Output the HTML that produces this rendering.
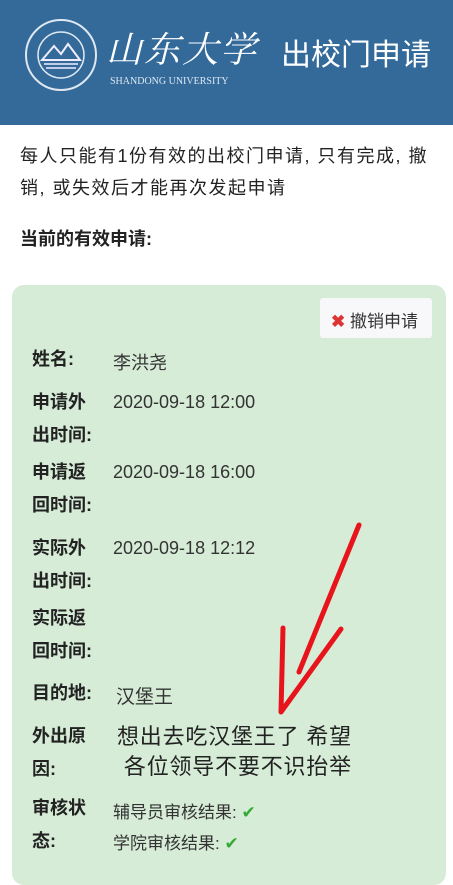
<!DOCTYPE html>
<html><head><meta charset="utf-8"><style>
body{margin:0;width:453px;height:872px;overflow:hidden;background:#fff;font-family:"Liberation Sans","Noto Sans CJK SC",sans-serif;position:relative;color:#222}
.hd{position:absolute;left:0;top:0;width:453px;height:125px;background:#336a9a}
.a{position:absolute;white-space:nowrap}
.card{position:absolute;left:12px;top:285px;width:434px;height:600px;background:#d6ecd7;border-radius:12px}
.l{font-weight:bold;font-size:18px;color:#222;line-height:33px}
.v{font-size:18px;color:#333}
</style></head><body>
<div class="hd">
<svg class="a" style="left:24px;top:18px" width="74" height="74" viewBox="0 0 74 74"><circle cx="37" cy="37" r="35" fill="none" stroke="#dfe8f1" stroke-width="2"/><circle cx="37" cy="37" r="23" fill="none" stroke="#dfe8f1" stroke-width="1.5"/><path d="M18 42 L30 28 L37 36 L44 26 L56 42 Z" fill="none" stroke="#eef" stroke-width="2"/><path d="M20 46h34M22 50h30" stroke="#eef" stroke-width="1.5"/></svg>
<div class="a" style="left:106px;top:22px;font-size:36px;color:#fff;font-family:'Noto Serif CJK SC',serif;font-style:italic;letter-spacing:2px">山东大学</div>
<div class="a" style="left:110px;top:76px;font-size:10px;color:#dfe8f1;font-family:'Liberation Serif',serif">SHANDONG UNIVERSITY</div>
<div class="a" style="left:281px;top:30px;font-size:30px;color:#fff">出校门申请</div>
</div>
<div class="a" style="left:20px;top:140px;font-size:18px;line-height:32px;color:#222;letter-spacing:1.5px">每人只能有1份有效的出校门申请, 只有完成, 撤<br>销, 或失效后才能再次发起申请</div>
<div class="a" style="left:20px;top:225px;font-size:18px;font-weight:bold">当前的有效申请:</div>
<div class="card"></div>
<div class="a" style="left:320px;top:298px;width:112px;height:40px;background:#f8f8fa;border-radius:3px"></div>
<div class="a" style="left:331px;top:307px;font-size:17px;color:#333"><span style="color:#d33;font-weight:bold">✖</span> 撤销申请</div>
<div class="a l" style="left:32px;top:343px">姓名:</div><div class="a v" style="left:113px;top:349px">李洪尧</div>
<div class="a l" style="left:32px;top:386px">申请外<br>出时间:</div><div class="a v" style="left:113px;top:392px">2020-09-18 12:00</div>
<div class="a l" style="left:32px;top:456px">申请返<br>回时间:</div><div class="a v" style="left:113px;top:462px">2020-09-18 16:00</div>
<div class="a l" style="left:32px;top:532px">实际外<br>出时间:</div><div class="a v" style="left:113px;top:538px">2020-09-18 12:12</div>
<div class="a l" style="left:32px;top:602px">实际返<br>回时间:</div>
<div class="a l" style="left:32px;top:677px">目的地:</div><div class="a v" style="left:116px;top:682px;font-size:19px">汉堡王</div>
<div class="a l" style="left:32px;top:720px">外出原<br>因:</div>
<div class="a" style="left:117px;top:722px;font-size:22px;line-height:30px;letter-spacing:0.8px">想出去吃汉堡王了 希望<br>&nbsp;各位领导不要不识抬举</div>
<div class="a l" style="left:32px;top:792px">审核状<br>态:</div>
<div class="a v" style="left:113px;top:797px;font-size:17px;line-height:31px">辅导员审核结果: <span style="color:#3a3">✔</span><br>学院审核结果: <span style="color:#3a3">✔</span></div>
<svg class="a" style="left:0;top:0" width="453" height="872"><path d="M359 525 L299 672 M283 628 L281 712 L341 629" fill="none" stroke="#e8141c" stroke-width="5" stroke-linecap="round" stroke-linejoin="round"/></svg>
</body></html>
